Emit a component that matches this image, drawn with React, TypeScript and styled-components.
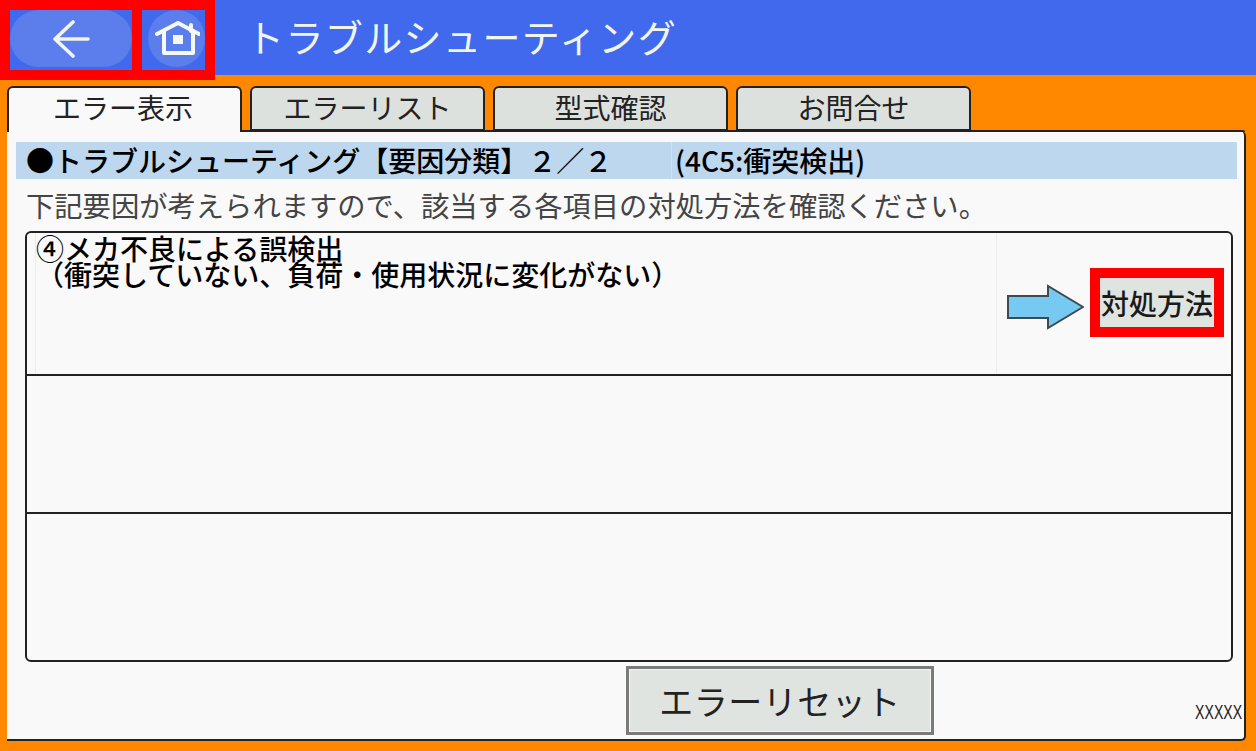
import React from "react";
import styled, { createGlobalStyle } from "styled-components";

const Global = createGlobalStyle`
  html, body { margin: 0; padding: 0; background: #ff8800; }
  body { font-family: "Noto Sans CJK JP", "Noto Sans", sans-serif; }
`;

const Page = styled.div`
  width: 1256px;
  height: 751px;
  background: #ff8800;
  display: flex;
  flex-direction: column;
  overflow: hidden;
`;

const Header = styled.header`
  height: 75px;
  flex: none;
  background: #4169ee;
  display: flex;
  align-items: flex-start;
`;

const NavFrame = styled.div`
  width: 215px;
  height: 80px;
  box-sizing: border-box;
  background: #ff0000;
  padding: 10px;
  display: flex;
  gap: 10px;
  flex: none;
  position: relative;
  z-index: 1;
`;

const NavCell = styled.div<{ $w: number }>`
  width: ${(p) => p.$w}px;
  height: 60px;
  background: #4169ee;
  display: flex;
  align-items: flex-start;
  justify-content: flex-end;
`;

const NavPill = styled.button<{ $w: number }>`
  width: ${(p) => p.$w}px;
  height: 57px;
  border: 0;
  padding: 0;
  border-radius: 29px;
  background: #5b7eec;
  display: flex;
  align-items: center;
  justify-content: center;
`;

const Title = styled.h1`
  margin: 0 0 0 31px;
  font-size: 38px;
  line-height: 72px;
  font-weight: 400;
  letter-spacing: 1.4px;
  color: #f2f5ee;
  white-space: nowrap;
`;

const TabBar = styled.nav`
  display: flex;
  gap: 8px;
  margin: 11px 0 0 7px;
  height: 45px;
  flex: none;
  position: relative;
  z-index: 1;
`;

const Tab = styled.div<{ $active?: boolean }>`
  box-sizing: border-box;
  width: 235px;
  height: ${(p) => (p.$active ? 46 : 45)}px;
  background: ${(p) => (p.$active ? "#f9f9f9" : "#dde1de")};
  border: 2px solid #222;
  border-bottom: ${(p) => (p.$active ? "0" : "2px solid #222")};
  border-radius: 6px 6px 0 0;
  padding-right: ${(p) => (p.$active ? 3 : 0)}px;
  color: #222;
  font-size: 28px;
  line-height: 38px;
  text-align: center;
  white-space: nowrap;
`;

const Panel = styled.main`
  box-sizing: border-box;
  width: 1239px;
  height: 610px;
  margin-left: 7px;
  background: #f9f9f9;
  border-right: 2px solid #222;
  border-bottom: 2px solid #222;
  border-top-right-radius: 5px;
  border-bottom-right-radius: 5px;
  padding: 11px 0 0 9px;
  display: flex;
  flex-direction: column;
  position: relative;
`;

const PanelTopLine = styled.div`
  position: absolute;
  left: 234px;
  right: -1px;
  top: -1px;
  height: 2px;
  background: #222;
  border-top-right-radius: 5px;
`;

const TitleBar = styled.div`
  width: 1221px;
  height: 37px;
  flex: none;
  background: #bdd7ee;
  display: grid;
  grid-template-columns: 655px 1fr;
  color: #000;
  font-size: 28px;
  line-height: 37px;
  font-weight: 500;
  white-space: nowrap;
`;

const TitleMain = styled.span`
  padding-left: 10px;
`;

const TitleCode = styled.span`
  padding-left: 3px;
  border-left: 1px solid #d0e0f0;
`;

const Description = styled.p`
  margin: 7px 0 0 10px;
  height: 45px;
  flex: none;
  color: #444;
  font-size: 28.3px;
  line-height: 38px;
  white-space: nowrap;
`;

const Table = styled.section`
  box-sizing: border-box;
  width: 1208px;
  height: 431px;
  margin-left: 9px;
  flex: none;
  border: 2px solid #222;
  border-radius: 6px;
  display: grid;
  grid-template-rows: 143px 138px 1fr;
`;

const Row = styled.div<{ $last?: boolean }>`
  border-bottom: ${(p) => (p.$last ? "0" : "2px solid #222")};
  box-sizing: border-box;
`;

const FirstRow = styled(Row)`
  display: grid;
  grid-template-columns: 9px 960px 1fr;
`;

const IndexCell = styled.div`
  border-right: 1px solid #ececec;
`;

const ItemText = styled.div`
  padding-top: 2px;
  color: #000;
  font-size: 28px;
  font-weight: 500;
  line-height: 26px;
  white-space: pre;
`;

const ActionCell = styled.div`
  border-left: 1px solid #ececec;
  display: flex;
  align-items: flex-start;
  padding: 35px 0 0 10px;
  gap: 6px;
`;

const Arrow = styled.svg`
  margin-top: 16px;
  flex: none;
`;

const FixButton = styled.button`
  box-sizing: border-box;
  width: 134px;
  height: 69px;
  border: 10px solid #ff0000;
  background: #e0e4e1;
  color: #1a1a1a;
  padding: 0;
  font-family: inherit;
  font-size: 28px;
  font-weight: 500;
  line-height: 44px;
  white-space: nowrap;
`;

const Footer = styled.div`
  flex: 1;
  padding: 4px 0 0 610px;
  display: flex;
  align-items: flex-start;
`;

const ResetButton = styled.button`
  box-sizing: border-box;
  width: 308px;
  height: 69px;
  background: #e0e4e1;
  border: 3px solid #7b7b7b;
  box-shadow: inset 0 0 0 1px #f3f5f3;
  color: #222;
  font-family: inherit;
  font-size: 34px;
  letter-spacing: 0.5px;
  padding: 0;
`;

const Version = styled.span`
  position: absolute;
  right: 2px;
  bottom: 15px;
  font-family: "Liberation Sans", sans-serif;
  font-size: 21px;
  line-height: 24px;
  color: #222;
  transform: scaleX(0.67);
  transform-origin: right center;
`;

const tabs = ["エラー表示", "エラーリスト", "型式確認", "お問合せ"];

export default function App() {
  return (
    <Page>
      <Global />
      <Header>
        <NavFrame>
          <NavCell $w={122}>
            <NavPill $w={122} aria-label="戻る">
              <svg width="38" height="38" viewBox="0 0 38 38" fill="none" stroke="#f1f5ee" strokeWidth="3.6" strokeLinecap="round" strokeLinejoin="round">
                <path d="M3 19H36M21 2 3 19 21 36" />
              </svg>
            </NavPill>
          </NavCell>
          <NavCell $w={63}>
            <NavPill $w={57} aria-label="ホーム">
              <svg width="46" height="36" viewBox="0 0 46 36" fill="none" stroke="#f6f9f2" strokeWidth="4" strokeLinejoin="round" strokeLinecap="round">
                <path d="M3 13 24 2 45 13" />
                <path d="M10 10V32H39V10" />
                <path d="M37 4V10" />
                <rect x="19" y="14" width="10" height="9" fill="#f6f9f2" strokeWidth="0" />
              </svg>
            </NavPill>
          </NavCell>
        </NavFrame>
        <Title>トラブルシューティング</Title>
      </Header>
      <TabBar>
        {tabs.map((t, i) => (
          <Tab key={t} $active={i === 0}>{t}</Tab>
        ))}
      </TabBar>
      <Panel>
        <PanelTopLine />
        <TitleBar>
          <TitleMain>●トラブルシューティング【要因分類】２／２</TitleMain>
          <TitleCode>(4C5:衝突検出)</TitleCode>
        </TitleBar>
        <Description>下記要因が考えられますので、該当する各項目の対処方法を確認ください。</Description>
        <Table>
          <FirstRow>
            <IndexCell />
            <ItemText>{"④メカ不良による誤検出\n（衝突していない、負荷・使用状況に変化がない）"}</ItemText>
            <ActionCell>
              <Arrow width="77" height="46" viewBox="0 0 77 46">
                <path d="M1 12H41V2L76 23 41 44V34H1Z" fill="#76c9f0" stroke="#3d4a52" strokeWidth="2" />
              </Arrow>
              <FixButton>対処方法</FixButton>
            </ActionCell>
          </FirstRow>
          <Row />
          <Row $last />
        </Table>
        <Footer>
          <ResetButton>エラーリセット</ResetButton>
        </Footer>
        <Version>XXXXX</Version>
      </Panel>
    </Page>
  );
}
